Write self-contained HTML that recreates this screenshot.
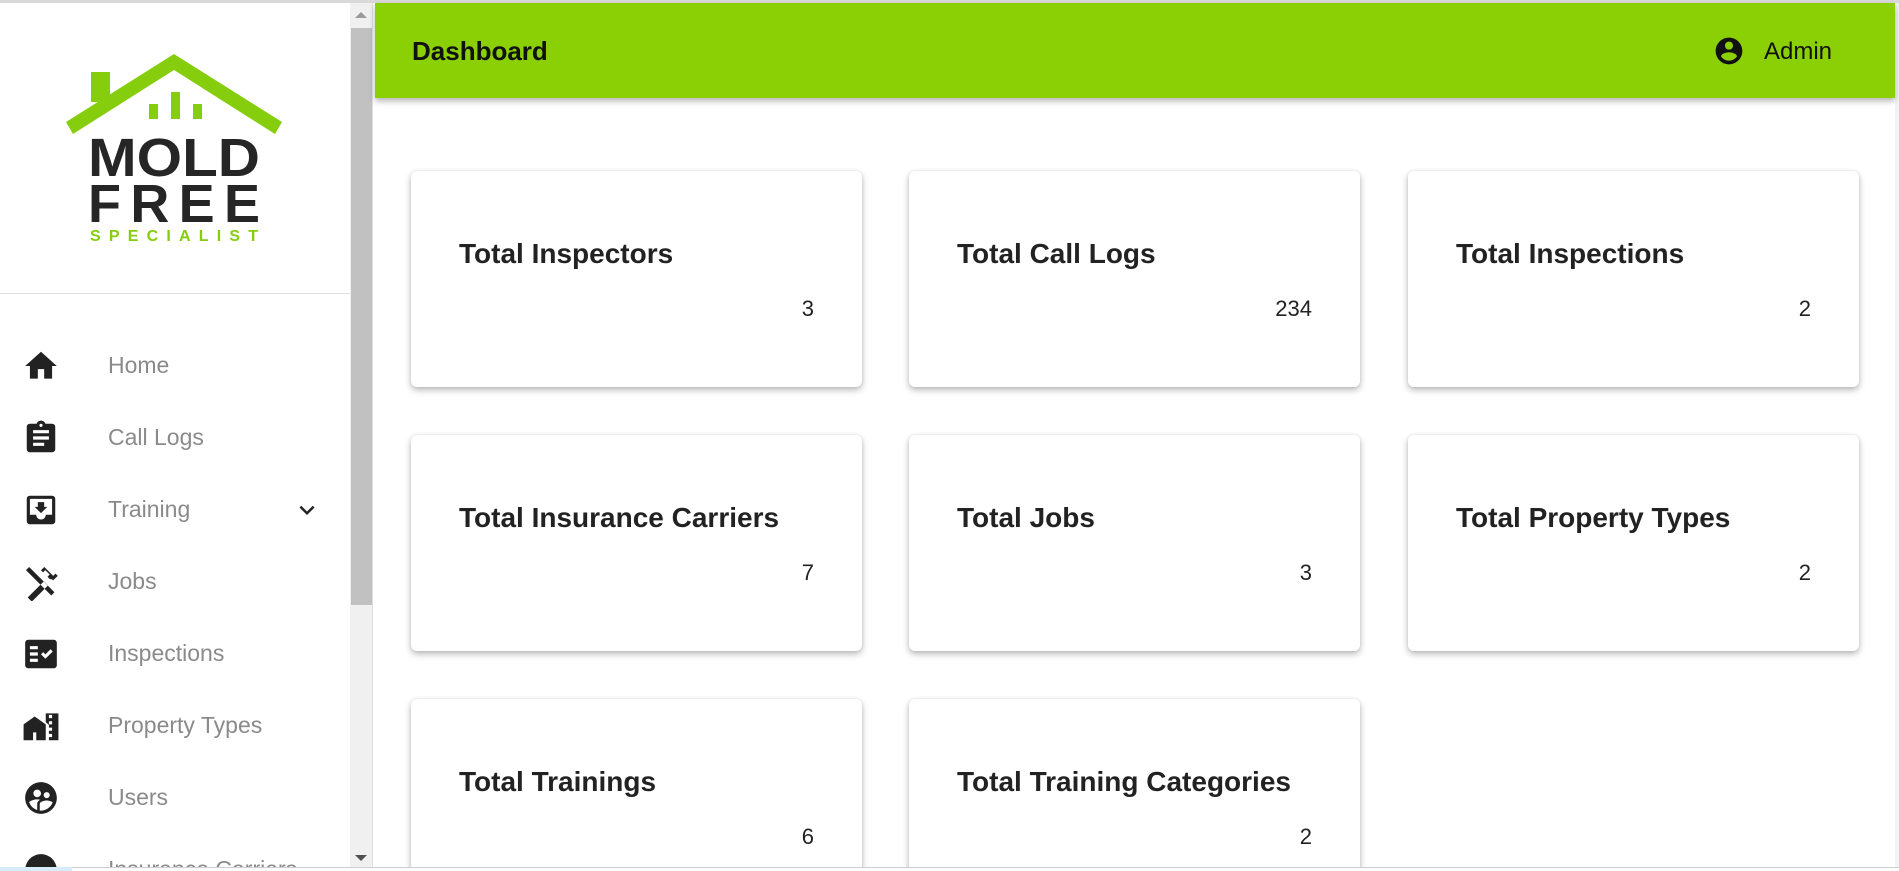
<!DOCTYPE html>
<html><head><meta charset="utf-8"><style>
*{box-sizing:border-box;margin:0;padding:0}
html,body{width:1899px;height:871px;overflow:hidden}
body{background:#fff;font-family:"Liberation Sans",sans-serif;position:relative}
#wrap{position:absolute;left:0;top:0;width:1899px;height:871px;overflow:hidden}
.top{position:absolute;left:0;top:0;width:1899px;height:3px;background:#d9d9d9}
.side{position:absolute;left:0;top:3px;width:350px;height:868px;background:#fff}
.sb{position:absolute;left:350px;top:3px;width:23px;height:868px;background:#f0f0f0;border-right:1px solid #e0e0e0}
.thumb{position:absolute;left:351px;top:28px;width:21px;height:577px;background:#c1c1c1}
.arr{position:absolute;left:355px;width:0;height:0;border-left:6px solid transparent;border-right:6px solid transparent}
.hdr{position:absolute;left:375px;top:3px;width:1520px;height:95px;background:#8bd004;box-shadow:0 3px 6px rgba(0,0,0,.3)}
.hdr .t{position:absolute;left:37px;top:33px;font-size:26px;font-weight:bold;color:#111}
.hdr .a{position:absolute;left:1389px;top:35px;font-size:24px;color:#111}
.rb{position:absolute;left:1895px;top:3px;width:4px;height:868px;background:#f3f3f3}
.sep{position:absolute;left:0;top:293px;width:350px;height:1px;background:#e0e0e0}
.item{position:absolute;left:0;width:350px;height:40px}
.item svg{position:absolute;left:22px;top:2px;width:38px;height:38px}
.item span{position:absolute;left:108px;top:7px;font-size:23px;color:#8a8a8a}
.card{position:absolute;width:451px;height:216px;background:#fff;border-radius:6px;box-shadow:0 3px 7px rgba(0,0,0,.28),0 0 3px rgba(0,0,0,.08)}
.card .h{position:absolute;left:48px;top:67px;font-size:28px;font-weight:bold;color:#222}
.card .n{position:absolute;right:48px;top:125px;font-size:22px;color:#222}
</style></head><body><div id="wrap">
<div class="top"></div>
<div class="side">
<svg style="position:absolute;left:60px;top:45px" width="230" height="200" viewBox="0 0 230 200">
<polygon points="6,74 114,6 222,74 215,86 114,22 13,86" fill="#86cd0e"/>
<rect x="31" y="24" width="19" height="30" fill="#86cd0e"/>
<rect x="89" y="56" width="9" height="15" fill="#86cd0e"/>
<rect x="111" y="44" width="9" height="27" fill="#86cd0e"/>
<rect x="133" y="56" width="9" height="15" fill="#86cd0e"/>
<text x="114" y="128" text-anchor="middle" font-family="Liberation Sans" font-weight="bold" font-size="54" fill="#262626" textLength="172" lengthAdjust="spacingAndGlyphs">MOLD</text>
<text x="114" y="174" text-anchor="middle" font-family="Liberation Sans" font-weight="bold" font-size="54" fill="#262626" textLength="172" lengthAdjust="spacing">FREE</text>
<text x="114" y="193" text-anchor="middle" font-family="Liberation Sans" font-weight="bold" font-size="16" fill="#86cd0e" textLength="168" lengthAdjust="spacing">SPECIALIST</text>
</svg>
</div>
<div class="sep"></div>
<div class="item" style="top:345px"><svg viewBox="0 0 24 24"><path d="M10 20v-6h4v6h5v-8h3L12 3 2 12h3v8z" fill="#222"/></svg><span>Home</span></div>
<div class="item" style="top:417px"><svg viewBox="0 0 24 24"><path d="M19 3h-4.2C14.4 1.8 13.3 1 12 1s-2.4.8-2.8 2H5c-1.1 0-2 .9-2 2v14c0 1.1.9 2 2 2h14c1.1 0 2-.9 2-2V5c0-1.1-.9-2-2-2zm-7 0c.6 0 1 .4 1 1s-.4 1-1 1-1-.4-1-1 .4-1 1-1zm2 14H7v-2h7v2zm3-4H7v-2h10v2zm0-4H7V7h10v2z" fill="#222"/></svg><span>Call Logs</span></div>
<div class="item" style="top:489px"><svg viewBox="0 0 24 24"><path d="M19 3H5c-1.1 0-2 .9-2 2v14c0 1.1.9 2 2 2h14c1.1 0 2-.9 2-2V5c0-1.1-.9-2-2-2zm0 12h-4c0 1.7-1.3 3-3 3s-3-1.3-3-3H5V5h14v10zm-3-5h-2V7h-4v3H8l4 4 4-4z" fill="#222"/></svg><span>Training</span>
<svg style="left:292px;top:6px;width:30px;height:30px" viewBox="0 0 24 24"><path d="M7.4 8.6 12 13.2l4.6-4.6L18 10l-6 6-6-6z" fill="#222"/></svg></div>
<div class="item" style="top:561px"><svg viewBox="0 0 24 24"><path d="M13.8 11.6 3.6 21.8l2.6 2.6L16.4 14.2zM17.5 10.1l-1.4-1.4 1.4-1.4-2.8-2.8-1.4 1.4L12 4.6 14.1 2.5l5.6 5.6 1.4-1.4L22.6 8.1 19.6 11l-.7-.7zM2.5 4.5l2-2 16 16-2 2z" fill="#222"/></svg><span>Jobs</span></div>
<div class="item" style="top:633px"><svg viewBox="0 0 24 24"><path d="M20 3H4c-1.1 0-2 .9-2 2v14c0 1.1.9 2 2 2h16c1.1 0 2-.9 2-2V5c0-1.1-.9-2-2-2zM10 17H5v-2h5v2zm0-4H5v-2h5v2zm0-4H5V7h5v2zm4.8 6L12 12.2l1.4-1.4 1.4 1.4 3.2-3.2 1.4 1.4z" fill="#222"/></svg><span>Inspections</span></div>
<div class="item" style="top:705px"><svg viewBox="0 0 24 24"><path d="M1 11v10h6v-5h2v5h6V11L8 6zm14-7v5.6l2 1.7V9h2v2h-2v2h2v2h-2v2h2v2h-2v2h6V4zm4 3h-2V5h2z" fill="#222"/></svg><span>Property Types</span></div>
<div class="item" style="top:777px"><svg viewBox="0 0 24 24"><path d="M12 2C6.5 2 2 6.5 2 12s4.5 10 10 10 10-4.5 10-10S17.5 2 12 2zm3.6 6.3c1.1 0 1.9.9 1.9 1.9s-.9 1.9-1.9 1.9-1.9-.9-1.9-1.9.8-1.9 1.9-1.9zm-6-1.6c1.3 0 2.4 1.1 2.4 2.4s-1.1 2.4-2.4 2.4-2.4-1.1-2.4-2.4 1-2.4 2.4-2.4zm0 9.1V19.6c-2.4-.8-4.3-2.6-5.1-5 1-1.1 3.6-1.7 5.1-1.7.5 0 1.2.1 1.9.2-1.6.9-1.9 2-1.9 2.7zM12 20h-.8v-4.2c0-1.5 3-2.2 4.4-2.2 1.1 0 2.9.4 3.8 1.1-1.2 3.1-4.1 5.3-7.4 5.3z" fill="#222"/></svg><span>Users</span></div>
<div class="item" style="top:849px"><svg viewBox="0 0 24 24"><circle cx="12" cy="12" r="10" fill="#222"/></svg><span>Insurance Carriers</span></div>
<div class="sb"></div>
<div class="thumb"></div>
<div class="arr" style="top:12px;border-bottom:6px solid #9a9a9a"></div>
<div class="arr" style="top:855px;border-top:6px solid #505050"></div>
<div class="rb"></div>
<div class="hdr"><div class="t">Dashboard</div>
<svg style="position:absolute;left:1338px;top:32px" width="32" height="32" viewBox="0 0 24 24"><path d="M12 2C6.5 2 2 6.5 2 12s4.5 10 10 10 10-4.5 10-10S17.5 2 12 2zm0 3c1.7 0 3 1.3 3 3s-1.3 3-3 3-3-1.3-3-3 1.3-3 3-3zm0 14.2c-2.5 0-4.7-1.3-6-3.2 0-2 4-3.1 6-3.1s6 1.1 6 3.1c-1.3 1.9-3.5 3.2-6 3.2z" fill="#111"/></svg>
<div class="a">Admin</div></div>
<div class="card" style="left:411px;top:171px"><div class="h">Total Inspectors</div><div class="n">3</div></div>
<div class="card" style="left:909px;top:171px"><div class="h">Total Call Logs</div><div class="n">234</div></div>
<div class="card" style="left:1408px;top:171px"><div class="h">Total Inspections</div><div class="n">2</div></div>
<div class="card" style="left:411px;top:435px"><div class="h">Total Insurance Carriers</div><div class="n">7</div></div>
<div class="card" style="left:909px;top:435px"><div class="h">Total Jobs</div><div class="n">3</div></div>
<div class="card" style="left:1408px;top:435px"><div class="h">Total Property Types</div><div class="n">2</div></div>
<div class="card" style="left:411px;top:699px"><div class="h">Total Trainings</div><div class="n">6</div></div>
<div class="card" style="left:909px;top:699px"><div class="h">Total Training Categories</div><div class="n">2</div></div>
<div style="position:absolute;left:0;top:867px;width:1899px;height:4px;background:#fff;border-top:1px solid #cfcfcf"></div>
<div style="position:absolute;left:0;top:867px;width:72px;height:4px;background:#d6ecf8"></div>
</div></body></html>
